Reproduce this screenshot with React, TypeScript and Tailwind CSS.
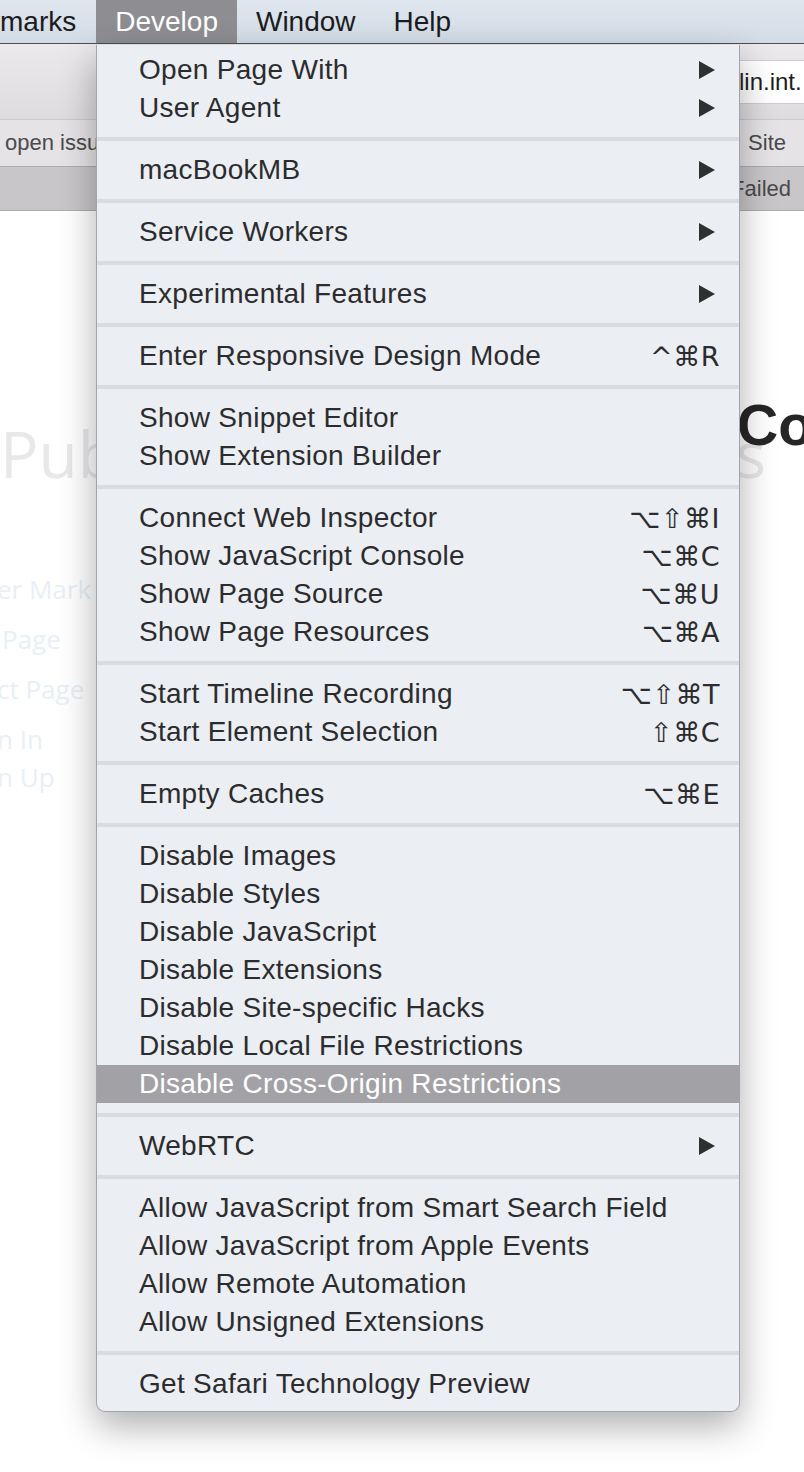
import React from 'react';

type MenuEntry =
  | { kind: 'item'; label: string; shortcut?: string; submenu?: boolean; active?: boolean }
  | { kind: 'sep' };

const item = (label: string, extra: Partial<{ shortcut: string; submenu: boolean; active: boolean }> = {}): MenuEntry => ({
  kind: 'item',
  label,
  ...extra,
});
const sep: MenuEntry = { kind: 'sep' };

// Develop menu contents, top to bottom
const entries: MenuEntry[] = [
  item('Open Page With', { submenu: true }),
  item('User Agent', { submenu: true }),
  sep,
  item('macBookMB', { submenu: true }),
  sep,
  item('Service Workers', { submenu: true }),
  sep,
  item('Experimental Features', { submenu: true }),
  sep,
  item('Enter Responsive Design Mode', { shortcut: '^⌘R' }),
  sep,
  item('Show Snippet Editor'),
  item('Show Extension Builder'),
  sep,
  item('Connect Web Inspector', { shortcut: '⌥⇧⌘I' }),
  item('Show JavaScript Console', { shortcut: '⌥⌘C' }),
  item('Show Page Source', { shortcut: '⌥⌘U' }),
  item('Show Page Resources', { shortcut: '⌥⌘A' }),
  sep,
  item('Start Timeline Recording', { shortcut: '⌥⇧⌘T' }),
  item('Start Element Selection', { shortcut: '⇧⌘C' }),
  sep,
  item('Empty Caches', { shortcut: '⌥⌘E' }),
  sep,
  item('Disable Images'),
  item('Disable Styles'),
  item('Disable JavaScript'),
  item('Disable Extensions'),
  item('Disable Site-specific Hacks'),
  item('Disable Local File Restrictions'),
  item('Disable Cross-Origin Restrictions', { active: true }),
  sep,
  item('WebRTC', { submenu: true }),
  sep,
  item('Allow JavaScript from Smart Search Field'),
  item('Allow JavaScript from Apple Events'),
  item('Allow Remote Automation'),
  item('Allow Unsigned Extensions'),
  sep,
  item('Get Safari Technology Preview'),
];

const SubmenuArrow = ({ active }: { active?: boolean }) => (
  <svg width="18" height="18" viewBox="0 0 18 18" className="mr-[4px]">
    <polygon points="1,0 17,9 1,18" fill={active ? '#ffffff' : '#2f3032'} />
  </svg>
);

const MenuBar = () => (
  <div className="flex h-[44px] items-center border-b border-[#4b5058] bg-gradient-to-b from-[#dfe6ee] to-[#d3dce6] text-[28px] text-[#1c1c1e]">
    <span className="pr-[20px]">marks</span>
    <span className="flex h-full items-center bg-[#8d8d92] px-[19px] text-white">Develop</span>
    <span className="px-[19px]">Window</span>
    <span className="px-[19px]">Help</span>
  </div>
);

const BrowserChrome = () => (
  <div className="text-[22px] text-[#4a4a4c]">
    {/* toolbar */}
    <div className="flex h-[75px] items-center justify-end bg-gradient-to-b from-[#ebe9eb] to-[#dedcde]">
      <div className="flex h-[44px] w-[70px] items-center rounded-l-[6px] border border-r-0 border-[#cfcdcf] bg-white pl-[4px] text-[24px] text-[#1e1e1e]">
        lin.int.
      </div>
    </div>
    {/* bookmarks bar */}
    <div className="flex h-[47px] items-center justify-between border-t border-[#cbc9cb] bg-[#e5e3e5] pl-[5px] pr-[18px]">
      <span>open issues</span>
      <span>Site</span>
    </div>
    {/* tab bar */}
    <div className="flex h-[45px] items-center justify-end border-y border-[#aeacae] bg-[#c8c6c8] pr-[13px]">
      <span>Failed</span>
    </div>
  </div>
);

const PageBehind = () => (
  <div className="relative flex-1 bg-white font-['Open_Sans',sans-serif]">
    <div className="pt-[211px] flex justify-between pr-[38px] text-[64px] leading-none text-[#e8e8eb]">
      <span>Pub</span>
      <span>lications</span>
    </div>
    <div className="mt-[90px] flex flex-col text-[26px] leading-none text-[#e8eff6]">
      <span className="-ml-[3px]">er Mark</span>
      <span className="mt-[24px] pl-[2px]">Page</span>
      <span className="mt-[24px] -ml-[3px]">ct Page</span>
      <span className="mt-[24px] -ml-[3px]">n In</span>
      <span className="mt-[12px] -ml-[3px]">n Up</span>
    </div>
    {/* heading of the dialog sitting on top of the page */}
    <span className="absolute left-[737px] top-[186px] font-['Liberation_Sans',sans-serif] text-[57px] font-bold leading-none text-[#262626]">
      Contact
    </span>
  </div>
);

const DevelopMenu = () => (
  <div className="absolute left-[96px] top-[45px] z-10 w-[644px] rounded-b-[9px] border-x border-b border-[#a3a4a7] bg-[#ebeef2] pb-[8px] pt-[6px] tracking-[0.3px] shadow-[0_14px_36px_rgba(0,0,0,0.32)]">
    {entries.map((e, i) =>
      e.kind === 'sep' ? (
        <div key={i} className="flex h-[24px] items-center">
          <div className="h-[4px] w-full bg-[#d8dbdf]" />
        </div>
      ) : (
        <div
          key={i}
          className={
            'flex h-[38px] items-center justify-between pl-[42px] pr-[19px] ' +
            (e.active ? 'bg-[#a2a2a6] text-white' : 'text-[#2c2c2e]')
          }
        >
          <span>{e.label}</span>
          {e.submenu && <SubmenuArrow active={e.active} />}
          {e.shortcut && (
            <span className="font-['DejaVu_Sans',sans-serif] text-[27px] tracking-[0.5px]">{e.shortcut}</span>
          )}
        </div>
      )
    )}
  </div>
);

export default function App() {
  return (
    <div className="relative flex h-[1472px] w-[804px] flex-col overflow-hidden bg-white font-['Liberation_Sans',Arial,sans-serif] text-[28px] leading-none">
      <MenuBar />
      <BrowserChrome />
      <PageBehind />
      <DevelopMenu />
    </div>
  );
}
